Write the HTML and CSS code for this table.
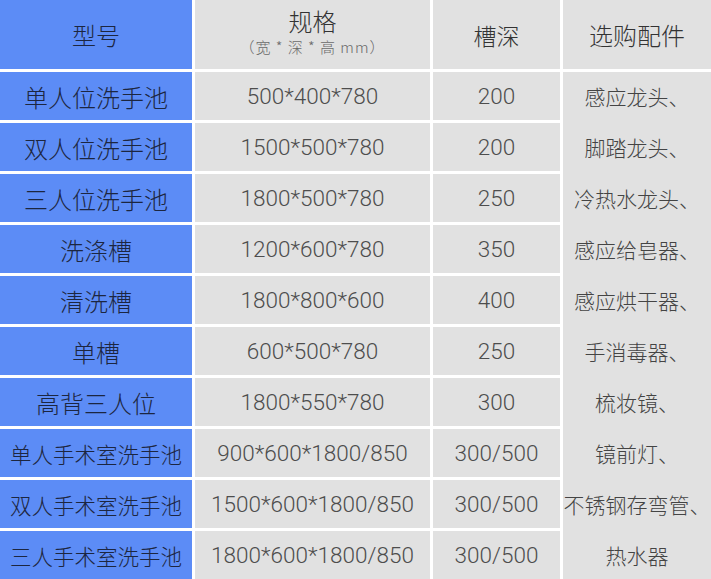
FILE: index.html
```html
<!DOCTYPE html>
<html lang="zh-CN">
<head>
<meta charset="utf-8">
<title>洗手池规格</title>
<link rel="stylesheet" href="styles.css">
</head>
<body>
<div class="spec-table">
  <div class="cell model head">型号</div>
  <div class="cell gray head spec-head">
    <span class="spec-title">规格</span>
    <span class="spec-sub">（宽 * 深 * 高 mm）</span>
  </div>
  <div class="cell gray head">槽深</div>
  <div class="cell gray head wide">选购配件</div>

  <div class="cell model">单人位洗手池</div>
  <div class="cell gray num">500*400*780</div>
  <div class="cell gray num">200</div>

  <div class="cell gray acc">
    <span class="acc-line">感应龙头、</span>
    <span class="acc-line">脚踏龙头、</span>
    <span class="acc-line">冷热水龙头、</span>
    <span class="acc-line">感应给皂器、</span>
    <span class="acc-line">感应烘干器、</span>
    <span class="acc-line">手消毒器、</span>
    <span class="acc-line">梳妆镜、</span>
    <span class="acc-line">镜前灯、</span>
    <span class="acc-line">不锈钢存弯管、</span>
    <span class="acc-line">热水器</span>
  </div>

  <div class="cell model">双人位洗手池</div>
  <div class="cell gray num">1500*500*780</div>
  <div class="cell gray num">200</div>

  <div class="cell model">三人位洗手池</div>
  <div class="cell gray num">1800*500*780</div>
  <div class="cell gray num">250</div>

  <div class="cell model">洗涤槽</div>
  <div class="cell gray num">1200*600*780</div>
  <div class="cell gray num">350</div>

  <div class="cell model">清洗槽</div>
  <div class="cell gray num">1800*800*600</div>
  <div class="cell gray num">400</div>

  <div class="cell model">单槽</div>
  <div class="cell gray num">600*500*780</div>
  <div class="cell gray num">250</div>

  <div class="cell model">高背三人位</div>
  <div class="cell gray num">1800*550*780</div>
  <div class="cell gray num">300</div>

  <div class="cell model long">单人手术室洗手池</div>
  <div class="cell gray num">900*600*1800/850</div>
  <div class="cell gray num">300/500</div>

  <div class="cell model long">双人手术室洗手池</div>
  <div class="cell gray num">1500*600*1800/850</div>
  <div class="cell gray num">300/500</div>

  <div class="cell model long">三人手术室洗手池</div>
  <div class="cell gray num">1800*600*1800/850</div>
  <div class="cell gray num">300/500</div>
</div>
</body>
</html>
```

FILE: styles.css
```css
html, body {
  margin: 0;
  padding: 0;
  background: #ffffff;
}

.spec-table {
  display: grid;
  grid-template-columns: 192px 235px 127px 148px;
  grid-template-rows: 69px repeat(10, 48px);
  column-gap: 3px;
  row-gap: 3px;
  width: 711px;
  font-family: "Liberation Sans", "Noto Sans CJK SC", sans-serif;
}

.cell {
  display: flex;
  align-items: center;
  justify-content: center;
  white-space: nowrap;
}

.model {
  background: #5c8cf6;
  color: #1c2640;
  font-family: "Noto Sans CJK SC", sans-serif;
  font-size: 24px;
  font-weight: 300;
}

.model.long {
  font-size: 21.5px;
}

.gray {
  background: #e1e1e1;
  color: #4a4a4a;
}

.head {
  font-family: "Noto Sans CJK SC", sans-serif;
  font-size: 23px;
  font-weight: 300;
  color: #333333;
}

.model.head {
  font-size: 24px;
  color: #1c2640;
}

.head.wide {
  font-size: 24px;
}

.spec-head {
  flex-direction: column;
  justify-content: flex-start;
  padding-top: 6px;
  box-sizing: border-box;
}

.spec-title {
  display: block;
  line-height: 30px;
  font-size: 24px;
}

.spec-sub {
  display: block;
  margin-top: 2px;
  font-size: 15px;
  line-height: 18px;
  letter-spacing: 1px;
  color: #6a6a6a;
}

.num {
  font-family: Roboto, "Liberation Sans", sans-serif;
  font-size: 22.5px;
  font-weight: 300;
  color: #4d4d4d;
}

.acc {
  grid-column: 4;
  grid-row: 2 / span 10;
  display: grid;
  grid-template-rows: repeat(10, 48px);
  row-gap: 3px;
  align-items: stretch;
  justify-content: stretch;
  font-family: "Noto Sans CJK SC", sans-serif;
  font-size: 21px;
  font-weight: 300;
  color: #444444;
}

.acc-line {
  display: flex;
  align-items: center;
  justify-content: center;
}
```
